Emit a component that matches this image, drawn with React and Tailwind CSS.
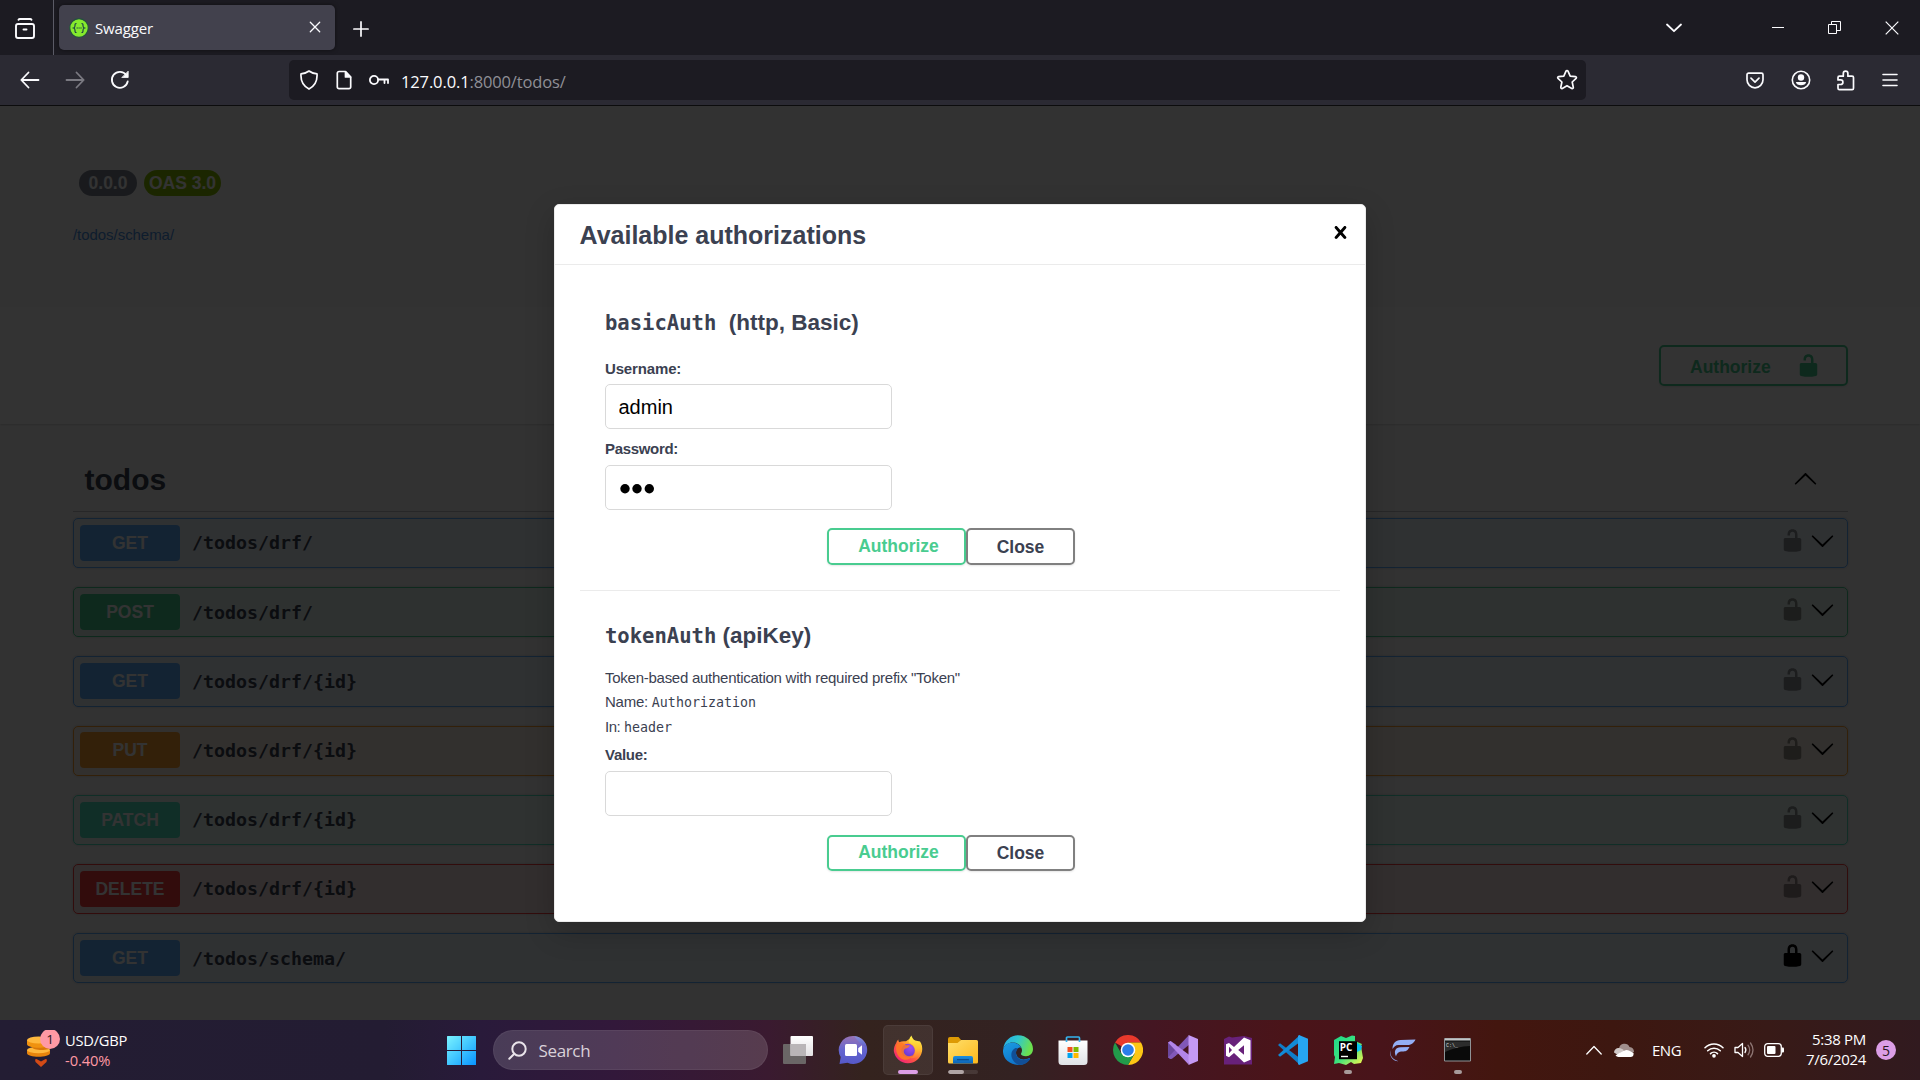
import React from "react";

const UI = "font-['Open_Sans','Noto_Sans',sans-serif]";
const MONO = "font-['DejaVu_Sans_Mono',monospace]";

/* ---------- Browser chrome ---------- */

function Stroke({ w = 20, h = 20, box = "0 0 20 20", sw = 1.6, className = "", children }) {
  return (
    <svg width={w} height={h} viewBox={box} fill="none" stroke="currentColor" strokeWidth={sw} strokeLinecap="round" strokeLinejoin="round" className={`block shrink-0 ${className}`}>
      {children}
    </svg>
  );
}

function TabBar() {
  return (
    <div className="flex h-[55px] bg-[#1c1b22] text-[#fbfbfe]">
      <div className="flex w-[54px] shrink-0 items-center border-r border-[#5b5b66] pl-[14px]">
        <Stroke w={22} h={22} box="0 0 22 22" sw={1.9} className="mt-[2px]">
          <path d="M4.5 1.8c.3-.5.8-.8 1.4-.8h10.200c.6 0 1.100.3 1.400.8" />
          <rect x="2" y="6" width="18" height="14" rx="2" />
          <path d="M9.500 11.500h3" />
        </Stroke>
      </div>
      <div className="mt-[5px] ml-[5px] flex h-[45px] w-[276px] items-center rounded-[5px] bg-[#42414d] pl-[10px] shadow-[0_0_4px_rgba(0,0,0,0.5)]">
        <svg width="20" height="20" viewBox="0 0 20 20" className="shrink-0">
          <circle cx="10" cy="10" r="9.300" fill="#85ea2d" stroke="#24503f" strokeWidth="1.200" />
          <path d="M7.500 5.500c-1.600 0-1.500.9-1.500 2.200S5.600 9.700 4.600 10c1 .3 1.400 1 1.400 2.300s-.1 2.200 1.500 2.200M12.500 5.500c1.600 0 1.500.9 1.500 2.200s.4 2 1.400 2.300c-1 .3-1.400 1-1.400 2.300s.1 2.200-1.500 2.200" fill="none" stroke="#173647" strokeWidth="1.100" />
          <path d="M7.600 10h5.100" stroke="#173647" strokeWidth="1.200" strokeDasharray="1.200 .7" />
        </svg>
        <span className="ml-[6px] pt-[1px] text-[15px] leading-5 tracking-[-0.150px]">Swagger</span>
        <Stroke w={12} h={12} box="0 0 12 12" sw={1.3} className="mr-[14.500px] mb-[1px] ml-auto">
          <path d="M1.300 1.300l9.400 9.400M10.700 1.300L1.300 10.700" />
        </Stroke>
      </div>
      <Stroke w={16} h={16} box="0 0 16 16" sw={1.7} className="mt-[21px] ml-[18px]">
        <path d="M8 .9v14.200M.9 8h14.200" />
      </Stroke>
      <div className="mr-[21px] ml-auto flex items-center">
        <Stroke w={16} h={10} box="0 0 16 10" sw={1.8} className="mr-[90px]">
          <path d="M1 1.500l7 6.700 7-6.700" />
        </Stroke>
        <svg width="12" height="14" className="mr-[44px] block"><path d="M0 6.500h12" stroke="currentColor" /></svg>
        <svg width="13" height="13" className="mr-[44px] block" fill="none" stroke="currentColor">
          <path d="M.5 3.500h8v9h-8zM3.500 3.500v-3h9v9h-4" />
        </svg>
        <svg width="14" height="14" className="block" fill="none" stroke="currentColor" strokeWidth="1.200">
          <path d="M.7.700l12.600 12.600M13.300.700L.7 13.300" />
        </svg>
      </div>
    </div>
  );
}

function NavBar() {
  return (
    <div className="flex h-[51px] items-start border-b border-[#0c0c0d] bg-[#2b2a33] pt-[5px] pr-[22px] text-[#fbfbfe]">
      <div className="flex h-10 w-[289px] items-center pl-[20px]">
        <Stroke w={20} h={18} box="0 0 20 18" sw={1.8}><path d="M1.500 9h17M8.500 1.500L1.300 9l7.200 7.500" /></Stroke>
        <Stroke w={20} h={18} box="0 0 20 18" sw={1.8} className="ml-[25px] text-[#7b7a82]"><path d="M1.500 9h17M11.500 1.500l7.200 7.500-7.200 7.500" /></Stroke>
        <Stroke w={20} h={20} box="0 0 20 20" sw={1.8} className="ml-[25px]">
          <path d="M17.700 11.500A8 8 0 1 1 16.300 5" />
          <path d="M18.200 1.500v6h-6z" fill="currentColor" strokeWidth=".8" />
        </Stroke>
      </div>
      <div className="flex h-10 w-[1297px] items-center rounded-[5px] bg-[#1c1b22] pl-[10px]">
        <Stroke w={20} h={20} box="0 0 20 20" sw={1.7}>
          <path d="M10 1c2.300 1.800 4.800 2.600 8 2.800.5 6.500-2.200 12.200-8 15.300C4.200 16 1.500 10.300 2 3.800 5.200 3.600 7.700 2.800 10 1z" />
        </Stroke>
        <Stroke w={16} h={20} box="0 0 16 20" sw={1.7} className="ml-[17px]">
          <path d="M3 1.500h6.500L14.700 7v10a1.700 1.700 0 0 1-1.700 1.700H3A1.700 1.700 0 0 1 1.300 17V3.200A1.700 1.700 0 0 1 3 1.500z" />
          <path d="M9.500 1.800V7h5z" fill="currentColor" />
        </Stroke>
        <Stroke w={20} h={12} box="0 0 20 12" sw={1.8} className="ml-[17px]">
          <circle cx="5" cy="6" r="4.100" /><path d="M9.300 5.500H19V9M15.500 5.500V9" />
        </Stroke>
        <span className="ml-[12px] pt-[3px] text-[16.500px] leading-6 tracking-[-0.130px]">
          127.0.0.1<span className="text-[#8f8f96]">:8000/todos/</span>
        </span>
        <Stroke w={22} h={22} box="0 0 22 22" sw={1.7} className="mr-[8px] ml-auto">
          <path d="M10 2.200a1.100 1.100 0 0 1 2 0l2.200 4.900 5.300.6c.9.100 1.200 1.100.6 1.700l-3.900 3.600 1.100 5.300c.2.900-.7 1.500-1.500 1.100L11 16.700l-4.700 2.700c-.8.400-1.700-.2-1.500-1.100l1.100-5.300L2 9.400c-.6-.6-.3-1.600.6-1.700l5.200-.6z" />
        </Stroke>
      </div>
      <div className="ml-auto flex h-10 items-center">
        <Stroke w={18} h={17} box="0 0 18 17" sw={1.7}>
          <path d="M2.600 1.200h12.800c.9 0 1.600.7 1.600 1.600v5a8 8 0 0 1-16 0v-5c0-.9.7-1.600 1.600-1.600z" /><path d="M5 6.200l4 3.900 4-3.900" />
        </Stroke>
        <svg width="20" height="20" viewBox="0 0 20 20" className="ml-[27px] block">
          <circle cx="10" cy="10" r="8.700" fill="none" stroke="currentColor" strokeWidth="1.600" />
          <circle cx="10" cy="7.500" r="3.200" fill="currentColor" />
          <path d="M4.800 12h10.400a5.300 4 0 0 1-10.400 0z" fill="currentColor" />
        </svg>
        <Stroke w={18} h={21} box="0 0 18 21" sw={1.700} className="ml-[26px]">
          <path d="M2.400 6.200h3.900V3.500a2.300 2.300 0 0 1 4.600 0v2.700h4.200c.8 0 1.400.6 1.400 1.400v10.600c0 .8-.6 1.400-1.400 1.400H2.400c-.8 0-1.400-.6-1.400-1.400v-3.700h2.600a2.300 2.300 0 0 0 0-4.600H1V7.600c0-.8.6-1.400 1.400-1.400z" />
        </Stroke>
        <Stroke w={16} h={14} box="0 0 16 14" sw={1.6} className="mb-[1px] ml-[27.500px]"><path d="M1 1.500h14M1 7h14M1 12.500h14" /></Stroke>
      </div>
    </div>
  );
}

/* ---------- API documentation page ---------- */

const LOCK_BODY = "c.549 0 1.428-.139 1.951-.307l1.196-.387c.524-.167.953-.757.953-1.306V9.199C17 8.646 16.352 8 15.800 8z";

function Lock({ open = true, className = "" }) {
  return (
    <svg width="25" height="25" viewBox="0 0 20 20" fill="currentColor" className={`block shrink-0 ${className}`}>
      {open ? (
        <path d={"M15.800 8H14V5.600C14 2.703 12.665 1 10 1 7.334 1 6 2.703 6 5.600V6h2v-.801C8 3.754 8.797 3 10 3c1.203 0 2 .754 2 2.199V8H4c-.553 0-1 .646-1 1.199V17c0 .549.428 1.139.951 1.307l1.197.387C5.672 18.861 6.550 19 7.100 19h5.800" + LOCK_BODY} />
      ) : (
        <path d={"M15.800 8H14V5.600C14 2.703 12.665 1 10 1 7.334 1 6 2.703 6 5.600V8H4c-.553 0-1 .646-1 1.199V17c0 .549.428 1.139.951 1.307l1.197.387C5.672 18.861 6.550 19 7.100 19h5.800" + LOCK_BODY + "M12 8H8V5.199C8 3.754 8.797 3 10 3c1.203 0 2 .754 2 2.199V8z"} />
      )}
    </svg>
  );
}

function Arrow({ up }) {
  return (
    <svg width="25" height="25" viewBox="0 0 20 20" className={`block shrink-0 ${up ? "rotate-180" : ""}`}>
      <path d="M17.418 6.109c.272-.268.709-.268.979 0s.271.701 0 .969l-7.908 7.830c-.27.268-.707.268-.979 0l-7.908-7.830c-.27-.268-.27-.701 0-.969s.709-.268.979 0L10 13.250l7.418-7.141z" />
    </svg>
  );
}

const METHODS = {
  GET: { row: "border-[#61affe] bg-[#61affe]/10", btn: "bg-[#61affe]" },
  POST: { row: "border-[#49cc90] bg-[#49cc90]/10", btn: "bg-[#49cc90]" },
  PUT: { row: "border-[#fca130] bg-[#fca130]/10", btn: "bg-[#fca130]" },
  PATCH: { row: "border-[#50e3c2] bg-[#50e3c2]/10", btn: "bg-[#50e3c2]" },
  DELETE: { row: "border-[#f93e3e] bg-[#f93e3e]/10", btn: "bg-[#f93e3e]" },
};

const OPERATIONS = [
  ["GET", "/todos/drf/"],
  ["POST", "/todos/drf/"],
  ["GET", "/todos/drf/{id}"],
  ["PUT", "/todos/drf/{id}"],
  ["PATCH", "/todos/drf/{id}"],
  ["DELETE", "/todos/drf/{id}"],
  ["GET", "/todos/schema/", true],
];

function Operation({ method, path, locked }) {
  const m = METHODS[method];
  return (
    <div className={`flex h-[50.300px] items-center rounded-[5px] border pl-[6px] shadow-[0_0_3px_rgba(0,0,0,0.19)] ${m.row}`}>
      <div className={`mb-[0.500px] flex h-9 w-[100px] items-center justify-center rounded-[4px] pl-[1px] text-[17.500px] font-bold text-white ${m.btn}`}>{method}</div>
      <span className={`ml-[12.500px] pt-[0.500px] text-[18.270px] leading-6 font-bold text-[#3b4151] ${MONO}`}>{path}</span>
      <div className="mr-[12px] mb-[5px] ml-auto flex gap-[5px] text-black">
        <Lock open={!locked} className={locked ? "" : "opacity-40"} />
        <Arrow />
      </div>
    </div>
  );
}

function DocsPage() {
  return (
    <div className="h-full bg-[#fafafa] pt-[64px] text-[#3b4151]">
      <div className="flex h-[26px] gap-[7px] pl-[79px] text-[17.500px] leading-[26px] font-bold text-white">
        <span className="w-[58px] rounded-full bg-[#7d8492] text-center">0.0.0</span>
        <span className="w-[77px] rounded-full bg-[#89bf04] text-center">OAS 3.0</span>
      </div>
      <div className="mt-[29px] pl-[73px] text-[15px] leading-5 tracking-[-0.050px] text-[#4990e2]">/todos/schema/</div>
      <div className="mt-[62px] flex h-[117px] items-start justify-end bg-white pt-[38px] pr-[72px] shadow-[0_1px_2px_rgba(0,0,0,0.15)]">
        <div className="flex h-[41px] w-[189px] items-center rounded-[5px] border-2 border-[#49cc90] pl-[29px] text-[17.500px] font-bold text-[#49cc90] shadow-[0_1px_2px_rgba(0,0,0,0.1)]">
          <span className="mt-[3px]">Authorize</span>
          <Lock className="ml-[25px]" />
        </div>
      </div>
      <div className="mx-[72.500px] flex h-[88px] items-center border-b border-[#3b4151]/30 pt-[24px] pr-[30px] pl-[12px]">
        <span className="text-[30px] leading-9 font-bold">todos</span>
        <div className="ml-auto text-black"><Arrow up /></div>
      </div>
      <div className="mx-[72.500px] mt-[6px] flex flex-col gap-[18.900px]">
        {OPERATIONS.map(([method, path, locked], i) => (
          <Operation key={i} method={method} path={path} locked={locked} />
        ))}
      </div>
    </div>
  );
}

/* ---------- Authorization dialog ---------- */

const FIELD = "block h-[45px] w-[287px] rounded-[5px] border border-[#d9d9d9] bg-white px-[12.500px] text-[20px] text-black";

function DialogButtons({ className }) {
  return (
    <div className={`ml-[222px] flex text-[17.500px] font-bold ${className}`}>
      <button className="flex w-[139px] items-center justify-center rounded-[5px] border-2 border-[#49cc90] pb-[2px] pl-[4px] leading-5 text-[#49cc90] shadow-[0_1px_2px_rgba(0,0,0,0.1)]">Authorize</button>
      <button className="flex w-[109px] items-center justify-center rounded-[5px] border-2 border-[#808080] leading-5 shadow-[0_1px_2px_rgba(0,0,0,0.1)]">Close</button>
    </div>
  );
}

function Dialog() {
  return (
    <div className="h-[718px] w-[812px] rounded-[5px] border border-[#ebebeb] bg-white text-[#3b4151] shadow-[0_10px_30px_rgba(0,0,0,0.2)]">
      <div className="flex h-[60px] items-center border-b border-[#ebebeb] pr-[12.500px] pl-[24.500px]">
        <h3 className="text-[25px] leading-8 font-bold">Available authorizations</h3>
        <svg width="25" height="25" viewBox="0 0 20 20" className="mb-[5px] ml-auto block text-black" fill="currentColor">
          <path d="M14.348 14.849c-.469.469-1.229.469-1.697 0L10 11.819l-2.651 3.029c-.469.469-1.229.469-1.697 0-.469-.469-.469-1.229 0-1.697l2.758-3.150-2.759-3.152c-.469-.469-.469-1.228 0-1.697.469-.469 1.228-.469 1.697 0L10 8.183l2.651-3.031c.469-.469 1.228-.469 1.697 0 .469.469.469 1.229 0 1.697l-2.758 3.152 2.758 3.150c.469.469.469 1.229 0 1.698z" />
        </svg>
      </div>
      <div className="mx-[25px] h-[326px] border-b border-[#ebebeb] pt-[44px] pl-[25px]">
        <h4 className="h-7 text-[22.500px] leading-7 font-bold whitespace-pre">
          <span className={`text-[20.560px] ${MONO}`}>basicAuth</span>{"  (http, Basic)"}
        </h4>
        <div className="mt-[21.500px] text-[15px] leading-5 font-bold tracking-[-0.150px]">Username:</div>
        <input className={`mt-[5.500px] pt-[1px] ${FIELD}`} defaultValue="admin" />
        <div className="mt-[10px] text-[15px] leading-5 font-bold tracking-[-0.320px]">Password:</div>
        <div className={`mt-[6px] ${FIELD}`}>
          <svg width="36" height="12" viewBox="0 0 36 12" className="mt-[17px] block">
            <circle cx="6" cy="5.800" r="4.700" /><circle cx="18" cy="5.800" r="4.700" /><circle cx="30.300" cy="5.800" r="4.700" />
          </svg>
        </div>
        <DialogButtons className="mt-[18px] h-[37px]" />
      </div>
      <div className="pt-[31px] pl-[50px] text-[15px] leading-5">
        <h4 className="h-7 text-[22.500px] leading-7 font-bold whitespace-pre">
          <span className={`text-[20.560px] ${MONO}`}>tokenAuth</span>{" (apiKey)"}
        </h4>
        <p className="mt-[18px] tracking-[-0.260px]">Token-based authentication with required prefix "Token"</p>
        <p className="mt-[4px] h-5"><span className="tracking-[-0.250px]">Name: </span><code className={`text-[13.300px] ${MONO}`}>Authorization</code></p>
        <p className="mt-[5px] h-5"><span className="tracking-[-0.450px]">In: </span><code className={`text-[13.300px] ${MONO}`}>header</code></p>
        <div className="mt-[8px] font-bold tracking-[-0.300px]">Value:</div>
        <input className={`mt-[6px] ${FIELD}`} defaultValue="" />
        <DialogButtons className="mt-[19px] h-[36px]" />
      </div>
    </div>
  );
}

/* ---------- Taskbar ---------- */

function Grad({ id, stops, x2 = 1, y2 = 1 }) {
  return (
    <linearGradient id={id} x1="0" y1="0" x2={x2} y2={y2}>
      {stops.map((c, i) => <stop key={i} offset={i / (stops.length - 1)} stopColor={c} />)}
    </linearGradient>
  );
}

const Pic = ({ children }) => <svg width="30" height="30" viewBox="0 0 30 30" className="block">{children}</svg>;

const StartIcon = () => (
  <Pic>
    <defs><linearGradient id="win" x1="0" y1="0" x2="29" y2="29" gradientUnits="userSpaceOnUse"><stop stopColor="#7df4ff" /><stop offset=".5" stopColor="#43c8ff" /><stop offset="1" stopColor="#0a95ff" /></linearGradient></defs>
    <path d="M.5 1H14v14H0V1.500zM15 1h13.500a.5.5 0 0 1 .5.5V15H15zM0 16h14v14H.5a.5.5 0 0 1-.5-.5zM15 16h14v13.500a.5.5 0 0 1-.5.5H15z" fill="url(#win)" />
  </Pic>
);

const TaskView = () => (
  <Pic>
    <defs><Grad id="tv" stops={["#ffffff", "#e2e0e2"]} x2={0} /></defs>
    <rect y="9" width="23" height="20" rx="1" fill="#6a6666" />
    <rect x="7.500" y="1" width="22.500" height="20" rx="1" fill="url(#tv)" />
    <path d="M7.500 9H23v12H7.500z" fill="#b9b5b7" />
  </Pic>
);

const Chat = () => (
  <Pic>
    <defs><Grad id="chat" stops={["#9873b4", "#6465d0", "#5558c8"]} x2={0} /><Grad id="chat2" stops={["#7f9ee8", "#5558c8"]} x2={0} /></defs>
    <path d="M15 1a14 14 0 1 1-5.500 26.800L1.500 29l1.200-7A14 14 0 0 1 15 1z" fill="url(#chat)" />
    <path d="M16 1a14 14 0 0 1 12.800 12C25 10 20 7 16 1z" fill="url(#chat2)" opacity=".7" />
    <rect x="7" y="9" width="12" height="12" rx="1.500" fill="#fff" />
    <path d="M20.200 13.300l3.800-3v9.400l-3.800-3z" fill="#fff" />
  </Pic>
);

const Firefox = () => (
  <Pic>
    <defs>
      <linearGradient id="ffa" x1="25" y1="3" x2="6" y2="27" gradientUnits="userSpaceOnUse"><stop stopColor="#fff44f" /><stop offset=".3" stopColor="#ffb02b" /><stop offset=".6" stopColor="#ff5a3c" /><stop offset="1" stopColor="#f0207c" /></linearGradient>
      <radialGradient id="ffb" cx=".7" cy=".3" r=".8"><stop stopColor="#a04ff0" /><stop offset="1" stopColor="#5b35c8" /></radialGradient>
      <linearGradient id="ffc" x1="0" y1="0" x2="0" y2="1"><stop stopColor="#fff04a" /><stop offset=".6" stopColor="#ffc02e" /><stop offset="1" stopColor="#ff7139" /></linearGradient>
    </defs>
    <path d="M3.200 8C3.500 6.500 4.500 5.300 5.300 4.500c0 1.200.4 2 1 2.700C8.300 6 10.500 6 13 6.300c1-.8 1.800-1.500 3-2L27 6.500c2 3 2.700 6.500 2 10A14.300 14.300 0 0 1 .8 16c0-3 .8-5.700 2.400-8z" fill="url(#ffa)" />
    <circle cx="15" cy="15.500" r="6.800" fill="url(#ffb)" />
    <path d="M3.500 9.500c3-2.500 5.500-2 8 0 2.300 1.300 4 .5 5.500 1-1 2.300-3 2.500-5 3.300-1.500 1-1.500 3-.8 4.500 1.800 3.200 6 3.900 9 1.500-2.500 5.500-9 6.500-13 3S2.500 14 3.500 9.500z" fill="#ff7a22" opacity=".85" />
    <path d="M18.500.5c-2.500 2.500-3 5.500-2.500 7 3.500 1.500 6.500 4.500 6.300 8.500-.2 3.500-2.300 6-5.300 7 5 1 10-1.500 11.300-7 .7-4-.3-7.500-2-9.500 0 1 0 1.500-.3 2C23.500 7 19 4 18.500.5z" fill="url(#ffc)" />
  </Pic>
);

const Explorer = () => (
  <Pic>
    <defs><Grad id="ex" stops={["#ffdf6b", "#fdb81c"]} /><Grad id="ex2" stops={["#1c8fe0", "#0c62b5"]} x2={0} /></defs>
    <path d="M0 4a2 2 0 0 1 2-2h8.500l2.500 3-2 3H0z" fill="#dd9a05" />
    <path d="M0 8h9.500L13 5H28.500A1.500 1.500 0 0 1 30 6.500V27a1.500 1.500 0 0 1-1.500 1.500h-27A1.500 1.500 0 0 1 0 27z" fill="url(#ex)" />
    <path d="M5 28.500v-5.500a2 2 0 0 1 2-2h16a2 2 0 0 1 2 2v5.500z" fill="url(#ex2)" />
    <path d="M9 24.700h12" stroke="#0a4a8c" strokeWidth="1.200" />
  </Pic>
);

const Edge = () => (
  <Pic>
    <defs>
      <Grad id="ed1" stops={["#27a8e6", "#2fc7cf", "#6be04e"]} y2={0.300} />
      <Grad id="ed2" stops={["#1b9de2", "#1486d6", "#0f6fc6"]} y2={1} x2={0.600} />
    </defs>
    <path d="M.2 13.500C1.500 5.500 7.700.2 15 .2 23.500.2 30 6.500 30 14c0 4.500-3.200 7.200-7 7.200-3.500 0-5.500-1.300-5-2.500 1-1.500 1.200-3 .8-4.700C18 10 14 7.500 9.500 7.500 5.500 7.500 2 10 .2 13.500z" fill="url(#ed1)" />
    <path d="M0 15.500C.5 10.500 4.500 7.500 9.500 7.500c3.500 0 7.500 2 9 5.500-2.500-1.500-5.500 1-5.500 4.500 0 5.500 6.500 9 13 5.500.8-.4 1.500.3.8 1.200C24 28 20 30 15.500 30 6.500 30-.5 23.500 0 15.500z" fill="url(#ed2)" />
    <path d="M12 13.300c-3.500 2-4.500 6-3 10 1.300 3.200 4 5.700 7 6.700 4.500 0 8.300-2 10.800-5.300.7-.9 0-1.600-.8-1.200-6.500 3.500-13 0-13-5.500 0-1.900.7-3.300 1.800-4.300-.8-.7-1.800-.8-2.800-.4z" fill="#114f97" />
  </Pic>
);

const Store = () => (
  <Pic>
    <defs><Grad id="st" stops={["#ffffff", "#dfe2e6"]} x2={0} /></defs>
    <path d="M.5 5.500h29V26.500a3.500 3.500 0 0 1-3.500 3.500H4a3.500 3.500 0 0 1-3.500-3.500z" fill="url(#st)" />
    <path d="M8.500 7V3a1 1 0 0 1 1-1h11a1 1 0 0 1 1 1v4" fill="none" stroke="#35b4ee" strokeWidth="1.700" />
    <path d="M9.500 12h5v5h-5z" fill="#f25022" /><path d="M15.500 12h5v5h-5z" fill="#7fba00" />
    <path d="M9.500 18h5v5h-5z" fill="#00a4ef" /><path d="M15.500 18h5v5h-5z" fill="#ffb900" />
  </Pic>
);

const Chrome = () => (
  <Pic>
    <path d="M15 15L2.010 7.500A15 15 0 0 1 28 7.500H15z" fill="#e8392c" />
    <path d="M28 7.500A15 15 0 0 1 15 30l6.500-11.200L15 7.500z" fill="#fdc615" />
    <path d="M2.010 7.500A15 15 0 0 0 15 30l6.500-11.200L8.500 18.800z" fill="#229a4a" />
    <circle cx="15" cy="15" r="7.300" fill="#fff" /><circle cx="15" cy="15" r="5.800" fill="#2b7de9" />
  </Pic>
);

const VisualStudio = () => (
  <Pic>
    <path d="M0 7.500L2.500 6 8 9.500v11L2.500 24 0 22.500z" fill="#6b479c" />
    <path d="M0 22.500L20.500.5 22 9 4 23.800 2.500 24z" fill="#8158b8" />
    <path d="M0 7.500l2.500-1.500L22 20.500 20.500 29.500z" fill="#b285e8" />
    <path d="M20.500 0L30 4v22l-9.500 4z" fill="#c59af5" />
  </Pic>
);

const VisualStudioOld = () => (
  <Pic>
    <path d="M1 4l5-2.500 3 1 12-1.500 8 2v26.500H1z" fill="#68217a" />
    <path d="M21 2.500l6.500 2.800v19.400L21 27.500 11 18l-5 4.200-3-1.500V9.300L6 8l5 4zM6 11.800v6.400L9 15zM21 10.300L15.200 15l5.800 4.700z" fill="#fff" fillRule="evenodd" />
  </Pic>
);

const VSCode = () => (
  <Pic>
    <path d="M0 10l2-1.700 20 14.900V30z" fill="#0f7dc9" />
    <path d="M0 20l2 1.700L22 7V0z" fill="#128ad6" />
    <path d="M21 0l9 3.800v22.400L21 30l-1-1V1z" fill="#27a5f2" />
  </Pic>
);

const PyCharm = () => (
  <Pic>
    <defs><Grad id="pc" stops={["#21d789", "#3be37d", "#fcf84a"]} /></defs>
    <path d="M1 5l7-4 5 2 6-2.500L22 1v5l7 3-1 2 2 12-2 5-7 1-3-2-5 3-7-2-5 1 1-7-1-2z" fill="url(#pc)" />
    <path d="M24 8l5 3-1 4-4 2z" fill="#07c3f2" />
    <path d="M6 6.200h18v18H6z" fill="#000" />
    <text x="6.800" y="15.500" fontSize="10" fontWeight="700" fill="#fff" fontFamily="Open Sans, sans-serif">PC</text>
    <path d="M8 21.500h7" stroke="#fff" strokeWidth="1.400" />
  </Pic>
);

const FIcon = () => (
  <Pic>
    <path d="M27.500 4.500c-2 4-4.500 5.500-8 5.500h-9c-3 0-4.500 2-6 4C4.500 8 7.500 5.500 12.500 5zM21.500 12c-2 4-4 4.500-7 4.500-4 0-5.500 1.500-6.500 5C5.500 16 7.500 12.500 12.500 12.200zM2.500 15c-.5 5 1 9 8 11.300C4 26 1 20.500 2.500 15z" fill="#93aef5" />
  </Pic>
);

const Terminal = () => (
  <Pic>
    <path d="M1.500 3.500h26v22.500h-26z" fill="#0a0a0a" stroke="#8f9396" />
    <path d="M2 4.500h25" stroke="#c3c6c8" strokeWidth="2" />
    <path d="M2 6.500h25v4.500c-9 .5-17 2-25 6z" fill="#2c2c2c" />
    <text x="3" y="11.500" fontSize="5" fill="#ddd" fontFamily="Liberation Mono, monospace">C:\_</text>
  </Pic>
);

const APPS = [
  { Icon: TaskView }, { Icon: Chat }, { Icon: Firefox, active: true }, { Icon: Explorer, grouped: true },
  { Icon: Edge }, { Icon: Store }, { Icon: Chrome }, { Icon: VisualStudio }, { Icon: VisualStudioOld },
  { Icon: VSCode }, { Icon: PyCharm, running: true }, { Icon: FIcon }, { Icon: Terminal, running: true },
];

function AppButton({ Icon, active, grouped, running }) {
  return (
    <div className="flex w-[55px] shrink-0 justify-center">
      <div className={`flex h-[50px] w-[50px] flex-col items-center rounded-[5px] ${active ? "border border-white/5 bg-white/7 pt-[9px]" : "pt-[10px]"}`}>
        <Icon />
        <div className={`mt-[5px] flex h-[4px] shrink-0 overflow-hidden rounded-full ${active ? "w-5 bg-[#dc9ee6]" : running ? "w-2 bg-[#a79a9a]" : grouped ? "w-[30px] bg-white/10" : ""}`}>
          {grouped && <span className="w-[16px] rounded-full bg-[#b0a5a5]" />}
        </div>
      </div>
    </div>
  );
}

function Taskbar() {
  return (
    <div className={`flex h-[60px] items-center bg-[linear-gradient(90deg,#231d33_0%,#231c32_20%,#291a3a_25%,#32183a_32%,#3a1a30_40%,#34231e_45%,#332222_53%,#441622_60%,#4a1419_67%,#48141a_72%,#43160f_78%,#3d1710_84%,#381a17_92%,#311a1f_100%)] text-white ${UI}`}>
      <div className="flex w-[434px] shrink-0 items-center pl-[26px]">
        <svg width="36" height="40" viewBox="0 0 36 40" className="block shrink-0">
          <path d="M1 20v3c0 5 23 5 23 0v-3z" fill="#e8850c" /><ellipse cx="12.500" cy="20" rx="11.500" ry="3.300" fill="#ffb83d" />
          <path d="M6 14v3c0 4 19 4 19 0v-3z" fill="#d97708" />
          <path d="M1 10v4c0 5 23 5 23 0v-4z" fill="#f0920f" /><ellipse cx="12.500" cy="10" rx="11.500" ry="3.500" fill="#ffb83d" />
          <path d="M9 29.500l1.500-.5 4.500 2.500 4.500-2.500 1.500.5-.5 2.500-5.500 5-5.500-5z" fill="#d24a16" />
          <circle cx="24" cy="9" r="10" fill="#ff99a4" />
          <text x="24" y="14" textAnchor="middle" fontSize="13.500" fill="#2a1620">1</text>
        </svg>
        <div className="mb-[1px] ml-[3px] text-[14.700px] leading-5 tracking-[-0.250px]">
          <div>USD/GBP</div>
          <div className="tracking-[-0.100px] text-[#ff99a4]">-0.40%</div>
        </div>
      </div>
      <div className="flex w-[55px] shrink-0 justify-center"><StartIcon /></div>
      <div className="ml-[4px] flex h-10 w-[275px] shrink-0 items-center rounded-full border border-white/5 bg-white/15 pl-[14px]">
        <Stroke w={19} h={19} box="0 0 19 19" sw={2} className="text-[#e9e4ea]">
          <circle cx="11" cy="8" r="6.700" /><path d="M6.300 12.700L1.300 17.700" />
        </Stroke>
        <span className="ml-[11.500px] pt-[2px] text-[17px] leading-6 tracking-[-0.350px] text-[#d9d1d9]">Search</span>
      </div>
      <div className="ml-[2.500px] flex shrink-0">
        {APPS.map((a, i) => <AppButton key={i} {...a} />)}
      </div>
      <div className="mr-[24px] ml-auto flex items-center">
        <Stroke w={16} h={10} box="0 0 16 10" sw={1.3}><path d="M.8 9L8 1.500 15.200 9" /></Stroke>
        <svg width="20" height="14" viewBox="0 0 20 14" className="ml-[12px] block">
          <path d="M5 5.500A5.500 5.500 0 0 1 15.500 4 5 5 0 0 1 20 9L10 13z" fill="#a08f8d" />
          <path d="M0 9.500A4.500 4.500 0 0 1 5 5c2 0 3 1 5 2.200L4 12z" fill="#cfc8c7" />
          <path d="M4.500 14a4.300 4.300 0 0 1-3-1.500C4 11 10 7 12.500 7c2 0 3.500 1 7 3a3.500 3.500 0 0 1-3 4z" fill="#fff" />
        </svg>
        <span className="ml-[18px] w-[30px] text-[15px] leading-5 tracking-[-0.500px]">ENG</span>
        <svg width="20" height="16" viewBox="0 0 20 16" className="ml-[22px] block" fill="none" stroke="#fff" strokeWidth="1.500" strokeLinecap="round">
          <path d="M1 5.800a12.700 12.700 0 0 1 18 0M3.700 8.800a9 9 0 0 1 12.600 0M6.500 11.600a5 5 0 0 1 7 0" /><circle cx="10" cy="13.800" r="1.100" fill="#fff" />
        </svg>
        <svg width="20" height="16" viewBox="0 0 20 16" className="ml-[10px] block" fill="none" stroke="#fff" strokeWidth="1.300" strokeLinejoin="round" strokeLinecap="round">
          <path d="M1 5.500h3L8.500 1.500v13L4 10.500H1z" /><path d="M11 5.500q1.800 2.500 0 5" />
          <path d="M14 3.200q3.400 4.800 0 9.600M16.500 1q5 7 0 14" stroke="#8d7573" />
        </svg>
        <svg width="20" height="14" viewBox="0 0 20 14" className="ml-[10px] block">
          <rect x=".7" y=".7" width="16.600" height="12.600" rx="3" fill="none" stroke="#fff" strokeWidth="1.300" />
          <rect x="3" y="3" width="8.500" height="8" rx="1" fill="#fff" /><path d="M18 4.500h1a1 1 0 0 1 1 1v3a1 1 0 0 1-1 1h-1z" fill="#fff" />
        </svg>
        <div className="mb-[3px] ml-[18px] w-[64px] text-right text-[15px] leading-5 tracking-[-0.300px] whitespace-nowrap">
          <div>5:38 PM</div>
          <div>7/6/2024</div>
        </div>
        <div className="ml-[10px] flex size-5 items-center justify-center rounded-full bg-[#dc9ee6] pt-px text-[14px] text-[#2a1620]">5</div>
      </div>
    </div>
  );
}

export default function App() {
  return (
    <div className="flex h-[1080px] w-[1920px] flex-col overflow-hidden">
      <div className={UI}>
        <TabBar />
        <NavBar />
      </div>
      <main className="relative h-[914px] shrink-0 overflow-hidden font-['Liberation_Sans',Arial,sans-serif]">
        <DocsPage />
        <div className="absolute inset-0 flex items-center justify-center bg-black/80">
          <Dialog />
        </div>
      </main>
      <Taskbar />
    </div>
  );
}
